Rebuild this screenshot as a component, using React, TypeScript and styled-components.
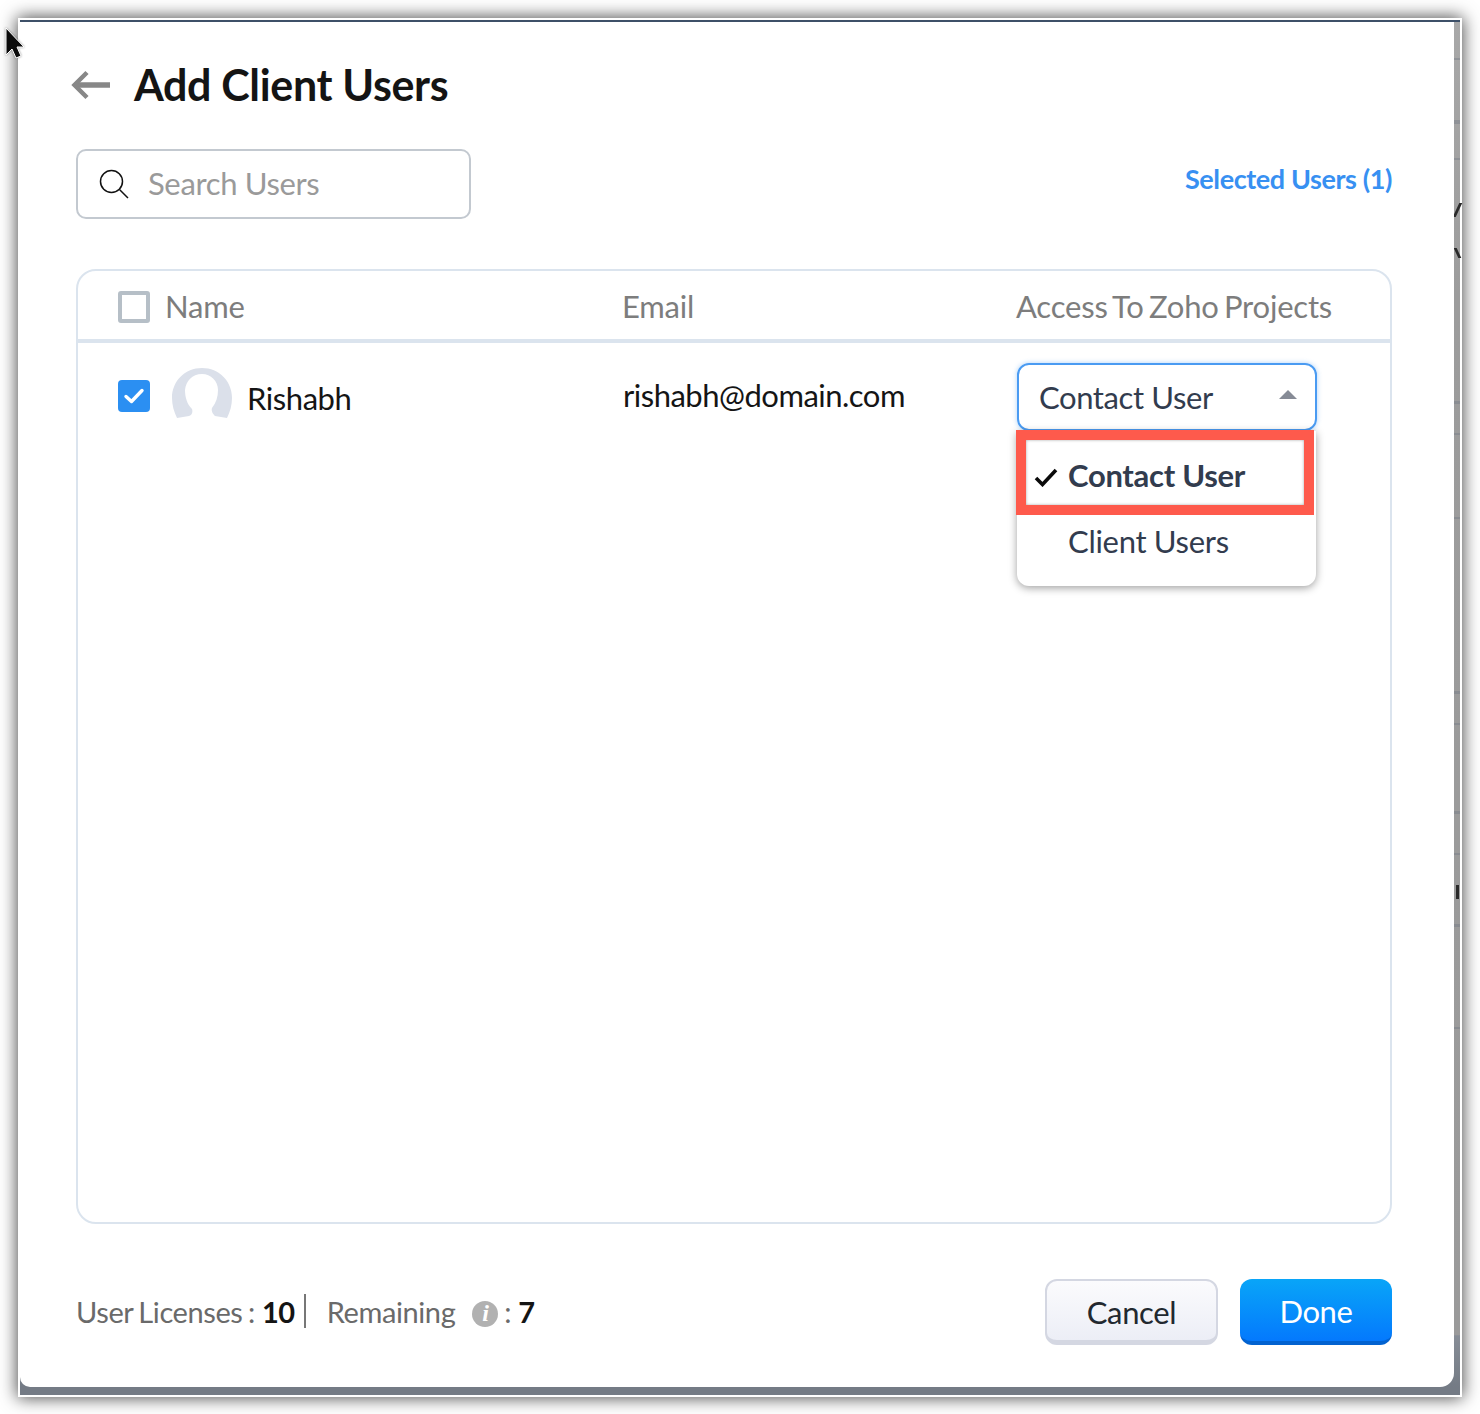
import styled, { createGlobalStyle } from "styled-components";

const GlobalStyle = createGlobalStyle`
    html, body {
        margin: 0;
        padding: 0;
        background: #ffffff;
    }
    body {
        font-family: "Lato", "Liberation Sans", sans-serif;
    }
`;

const Page = styled.div`
    position: relative;
    width: 1480px;
    height: 1414px;
    padding: 18px;
    box-sizing: border-box;
    overflow: hidden;
`;

const Frame = styled.div`
    position: relative;
    width: 1444px;
    height: 1379px;
    box-sizing: border-box;
    border: 2px solid #ffffff;
    background: linear-gradient(
        180deg,
        #a8a8a8 0%,
        #9c9c9c 20%,
        #9a9a9a 95.6%,
        #878d96 95.7%,
        #747b85 99.4%
    );
    box-shadow: 0 0 16px 1px rgba(0, 0, 0, 0.7);
    display: flex;
    flex-direction: column;
`;

const TopLine = styled.div`
    height: 2px;
    flex: none;
    background: #3d5068;
`;

const Dialog = styled.div`
    position: relative;
    width: 1434px;
    height: 1365px;
    box-sizing: border-box;
    padding: 0 62px 0 56px;
    background: #ffffff;
    border-radius: 0 0 14px 10px;
    display: flex;
    flex-direction: column;
`;

const Header = styled.div`
    display: flex;
    align-items: center;
    height: 104px;
    margin-left: -5px;
    padding-top: 22px;
    box-sizing: border-box;
    gap: 23px;
`;

const Title = styled.h1`
    margin: 0;
    font-size: 43px;
    line-height: 50px;
    font-weight: 700;
    letter-spacing: -0.35px;
    color: #141414;
`;

const Toolbar = styled.div`
    display: flex;
    justify-content: space-between;
    align-items: flex-start;
    margin-top: 23px;
`;

const SearchBox = styled.div`
    width: 395px;
    height: 70px;
    box-sizing: border-box;
    border: 2px solid #c3c9d0;
    border-radius: 10px;
    display: flex;
    align-items: center;
    padding-left: 21px;
    gap: 19px;
`;

const SearchText = styled.span`
    font-size: 31px;
    letter-spacing: -0.35px;
    color: #9a9a9a;
    padding-bottom: 2px;
`;

const SelectedLink = styled.a`
    font-size: 27px;
    font-weight: 700;
    letter-spacing: -0.4px;
    line-height: 34px;
    margin-top: 13px;
    color: #3790f2;
`;

const Table = styled.div`
    margin-top: 50px;
    height: 955px;
    box-sizing: border-box;
    border: 2px solid #dbe4ee;
    border-radius: 20px;
    display: flex;
    flex-direction: column;
`;

const Row = styled.div<{ $head?: boolean }>`
    display: grid;
    grid-template-columns: 504px 394px 1fr;
    padding-left: 40px;
    padding-top: ${(p) => (p.$head ? "4px" : "0")};
    height: ${(p) => (p.$head ? "64px" : "auto")};
    border-bottom: ${(p) => (p.$head ? "4px solid #dbe4ee" : "none")};
    box-sizing: content-box;
    align-items: ${(p) => (p.$head ? "center" : "start")};
`;

const NameCell = styled.div`
    display: flex;
    align-items: center;
`;

const HeadText = styled.span`
    font-size: 31px;
    letter-spacing: -0.2px;
    word-spacing: -2.4px;
    color: #7d7d7d;
    margin-top: -3px;
`;

const EmptyBox = styled.span`
    width: 32px;
    height: 32px;
    box-sizing: border-box;
    border: 4px solid #b6bfc7;
    border-radius: 3px;
    margin-right: 15px;
`;

const CheckedBox = styled.span`
    width: 32px;
    height: 32px;
    margin-top: 6px;
    border-radius: 4px;
    background: #2b8ff2;
    display: flex;
    align-items: center;
    justify-content: center;
    margin-right: 22px;
`;

const BodyCellName = styled(NameCell)`
    padding-top: 25px;
`;

const UserName = styled.span`
    font-size: 31px;
    letter-spacing: -0.43px;
    color: #151515;
    margin-left: 15px;
    padding-top: 10px;
`;

const Email = styled.div`
    font-size: 31px;
    letter-spacing: -0.5px;
    color: #151515;
    padding: 33px 0 0 1px;
`;

const SelectCell = styled.div`
    position: relative;
    padding: 20px 0 0 1px;
`;

const SelectBox = styled.div`
    width: 300px;
    height: 68px;
    box-sizing: border-box;
    border: 2px solid #4a9bf2;
    border-radius: 12px;
    box-shadow: 0 0 5px rgba(74, 155, 242, 0.45);
    display: flex;
    align-items: center;
    justify-content: space-between;
    padding: 0 18px 0 20px;
    font-size: 31px;
    letter-spacing: -0.4px;
    color: #323c4e;
`;

const Caret = styled.span`
    width: 0;
    height: 0;
    border-left: 9px solid transparent;
    border-right: 9px solid transparent;
    border-bottom: 9px solid #868b96;
    margin-bottom: 6px;
`;

const Menu = styled.div`
    position: absolute;
    top: 88px;
    left: 1px;
    width: 299px;
    height: 155px;
    box-sizing: border-box;
    background: #ffffff;
    border-radius: 0 0 12px 12px;
    box-shadow: 0 2px 9px rgba(0, 0, 0, 0.38);
    padding-left: 51px;
`;

const MenuItem = styled.div<{ $active?: boolean }>`
    position: relative;
    height: ${(p) => (p.$active ? "75px" : "70px")};
    display: flex;
    align-items: center;
    font-size: 31px;
    font-weight: ${(p) => (p.$active ? 700 : 400)};
    letter-spacing: -0.3px;
    color: #323c4e;
    padding-top: ${(p) => (p.$active ? "13px" : "0")};
    box-sizing: border-box;
`;

const ItemCheck = styled.svg`
    position: absolute;
    left: -34px;
    top: 37px;
`;

const Highlight = styled.div`
    position: absolute;
    top: 87px;
    left: 0;
    width: 298px;
    height: 85px;
    box-sizing: border-box;
    border: 10px solid #fe5a4c;
    box-shadow: inset 0 0 3px rgba(0, 0, 0, 0.35);
`;

const Footer = styled.div`
    display: flex;
    justify-content: space-between;
    align-items: center;
    margin-top: 55px;
`;

const Licenses = styled.div`
    display: flex;
    align-items: center;
    font-size: 29px;
    color: #6a6a6a;
    letter-spacing: -0.4px;
    word-spacing: -1.5px;
    padding-bottom: 2px;
`;

const Count = styled.b`
    font-weight: 700;
    color: #141414;
    margin-left: 7px;
`;

const Divider = styled.span`
    width: 2px;
    height: 34px;
    background: #777777;
    margin: 0 21px 0 9px;
`;

const InfoBadge = styled.span`
    width: 26px;
    height: 26px;
    border-radius: 50%;
    background: #b1b1b1;
    color: #ffffff;
    font-family: "Liberation Serif", serif;
    font-style: italic;
    font-weight: 700;
    font-size: 24px;
    display: flex;
    align-items: center;
    justify-content: center;
    margin: 5px 6px 0 17px;
`;

const Actions = styled.div`
    display: flex;
    gap: 22px;
`;

const CancelButton = styled.button`
    width: 173px;
    height: 66px;
    box-sizing: border-box;
    border: 2px solid #d4d7e2;
    border-bottom-width: 5px;
    border-radius: 12px;
    background: linear-gradient(180deg, #fbfbfd, #eceef6);
    font-family: inherit;
    font-size: 31px;
    letter-spacing: -0.35px;
    color: #22282f;
    padding: 2px 0 0;
`;

const DoneButton = styled.button`
    width: 152px;
    height: 66px;
    box-sizing: border-box;
    border: 0;
    border-bottom: 4px solid #0262d0;
    border-radius: 12px;
    background: linear-gradient(180deg, #09a5f8, #0479fd);
    font-family: inherit;
    font-size: 31px;
    letter-spacing: -0.4px;
    color: #ffffff;
    padding: 2px 0 0;
`;

const Cursor = styled.svg`
    position: absolute;
    left: 3px;
    top: 27px;
    filter: drop-shadow(0 0 1px rgba(0, 0, 0, 0.4));
`;

// bits of the page behind the dialog, showing through the strip on its right
const Mark = styled.span<{ $top: number; $h: number }>`
    position: absolute;
    right: 0;
    width: 6px;
    top: ${(p) => p.$top}px;
    height: ${(p) => p.$h}px;
    background: rgba(100, 110, 125, 0.32);
`;

const Glyph = styled.span<{ $top: number; $h: number; $skew: number }>`
    position: absolute;
    right: 1px;
    width: 3px;
    top: ${(p) => p.$top}px;
    height: ${(p) => p.$h}px;
    background: #2a2a2a;
    transform: skewX(${(p) => p.$skew}deg);
`;

const backMarks = [
    { top: 38, h: 2 },
    { top: 100, h: 4 },
    { top: 138, h: 2 },
    { top: 381, h: 3 },
    { top: 413, h: 2 },
    { top: 497, h: 2 },
    { top: 671, h: 3 },
    { top: 703, h: 2 },
    { top: 791, h: 3 },
    { top: 833, h: 2 },
    { top: 904, h: 3 },
    { top: 1007, h: 2 },
];

const backGlyphs = [
    { top: 183, h: 14, skew: -25 },
    { top: 228, h: 10, skew: 25 },
    { top: 865, h: 14, skew: 0 },
];

const App = () => {
    return (
        <Page>
            <GlobalStyle />
            <Frame>
                <TopLine />
                {backMarks.map((m) => (
                    <Mark key={m.top} $top={m.top} $h={m.h} />
                ))}
                {backGlyphs.map((g) => (
                    <Glyph key={g.top} $top={g.top} $h={g.h} $skew={g.skew} />
                ))}
                <Dialog>
                    <Header>
                        <svg width="40" height="30" viewBox="0 0 40 30" fill="none">
                            <path d="M39 15H5" stroke="#878787" strokeWidth="5.5" />
                            <path d="M16 2.5 3.5 15 16 27.5" stroke="#878787" strokeWidth="4.5" />
                        </svg>
                        <Title>Add Client Users</Title>
                    </Header>
                    <Toolbar>
                        <SearchBox>
                            <svg width="30" height="30" viewBox="0 0 30 30" fill="none">
                                <circle cx="12.5" cy="12.5" r="11" stroke="#111" strokeWidth="1.5" />
                                <path d="m20.5 20.5 8.5 8.5" stroke="#111" strokeWidth="1.5" />
                            </svg>
                            <SearchText>Search Users</SearchText>
                        </SearchBox>
                        <SelectedLink>Selected Users (1)</SelectedLink>
                    </Toolbar>
                    <Table>
                        <Row $head>
                            <NameCell>
                                <EmptyBox />
                                <HeadText>Name</HeadText>
                            </NameCell>
                            <HeadText>Email</HeadText>
                            <HeadText>Access To Zoho Projects</HeadText>
                        </Row>
                        <Row>
                            <BodyCellName>
                                <CheckedBox>
                                    <svg width="22" height="18" viewBox="0 0 22 18" fill="none">
                                        <path d="m3 9.5 5.5 5L19 3.5" stroke="#fff" strokeWidth="3.4" strokeLinecap="round" strokeLinejoin="round" />
                                    </svg>
                                </CheckedBox>
                                <svg width="60" height="50" viewBox="0 0 60 50">
                                    <path
                                        d="M30 0C13 0 0 13 0 30c0 7 2 14 5 20l12-2c3-1 4-4 3-7-5-5-7-12-7-19C14 13 20 6 30 6c9 0 16 7 16 16 0 7-2 13-6 18-1 3 1 6 3 8l12 2c3-6 5-13 5-20C60 13 47 0 30 0Z"
                                        fill="#dbe0ea"
                                    />
                                </svg>
                                <UserName>Rishabh</UserName>
                            </BodyCellName>
                            <Email>rishabh@domain.com</Email>
                            <SelectCell>
                                <SelectBox>
                                    Contact User
                                    <Caret />
                                </SelectBox>
                                <Menu>
                                    <MenuItem $active>
                                        <ItemCheck width="24" height="19" viewBox="0 0 24 19" fill="none">
                                            <path d="M2 10l6.5 6.5L22 2" stroke="#0a0a0a" strokeWidth="3.6" />
                                        </ItemCheck>
                                        Contact User
                                    </MenuItem>
                                    <MenuItem>Client Users</MenuItem>
                                </Menu>
                                <Highlight />
                            </SelectCell>
                        </Row>
                    </Table>
                    <Footer>
                        <Licenses>
                            User Licenses :<Count>10</Count>
                            <Divider />
                            Remaining
                            <InfoBadge>i</InfoBadge>:<Count>7</Count>
                        </Licenses>
                        <Actions>
                            <CancelButton>Cancel</CancelButton>
                            <DoneButton>Done</DoneButton>
                        </Actions>
                    </Footer>
                </Dialog>
            </Frame>
            <Cursor width="22" height="36" viewBox="0 0 22 36">
                <path d="M3 1v27l6-6 4 9 5-2-4-9h7Z" fill="#0b0b0b" stroke="#fff" strokeWidth="1" />
            </Cursor>
        </Page>
    );
};

export default App;
